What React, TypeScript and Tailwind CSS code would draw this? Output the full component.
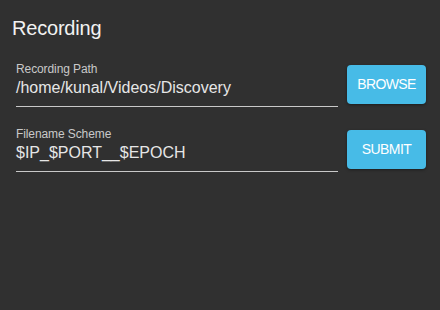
const font = { fontFamily: '"Liberation Sans", Arial, sans-serif' };

type FieldRowProps = { label: string; value: string; action: string };

function FieldRow({ label, value, action }: FieldRowProps) {
  return (
    <div className="flex items-center gap-[9px]">
      <div className="w-[322px] border-b border-[#c8c8c8] pb-[8px]">
        <div className="text-[12px] leading-[14px] text-[#c9c9c9] tracking-[-0.1px]">
          {label}
        </div>
        <div className="mt-[2px] text-[16px] leading-[20px] text-[#e6e6e6]">
          {value}
        </div>
      </div>
      <button className="w-[79px] h-[39px] rounded-[4px] bg-[#47bbe7] text-white text-[14px] tracking-[-0.6px] shadow-[0_1px_3px_rgba(0,0,0,0.4)]">
        {action}
      </button>
    </div>
  );
}

export default function App() {
  return (
    <div
      className="w-[440px] h-[310px] bg-[#303030] overflow-hidden pt-[16px]"
      style={font}
    >
      <h1 className="pl-[12px] text-[20px] leading-[24px] text-[#f2f2f2] tracking-[-0.2px]">
        Recording
      </h1>
      <div className="mt-[22px] pl-[16px] flex flex-col gap-[20px]">
        <FieldRow
          label="Recording Path"
          value="/home/kunal/Videos/Discovery"
          action="BROWSE"
        />
        <FieldRow
          label="Filename Scheme"
          value="$IP_$PORT__$EPOCH"
          action="SUBMIT"
        />
      </div>
    </div>
  );
}
